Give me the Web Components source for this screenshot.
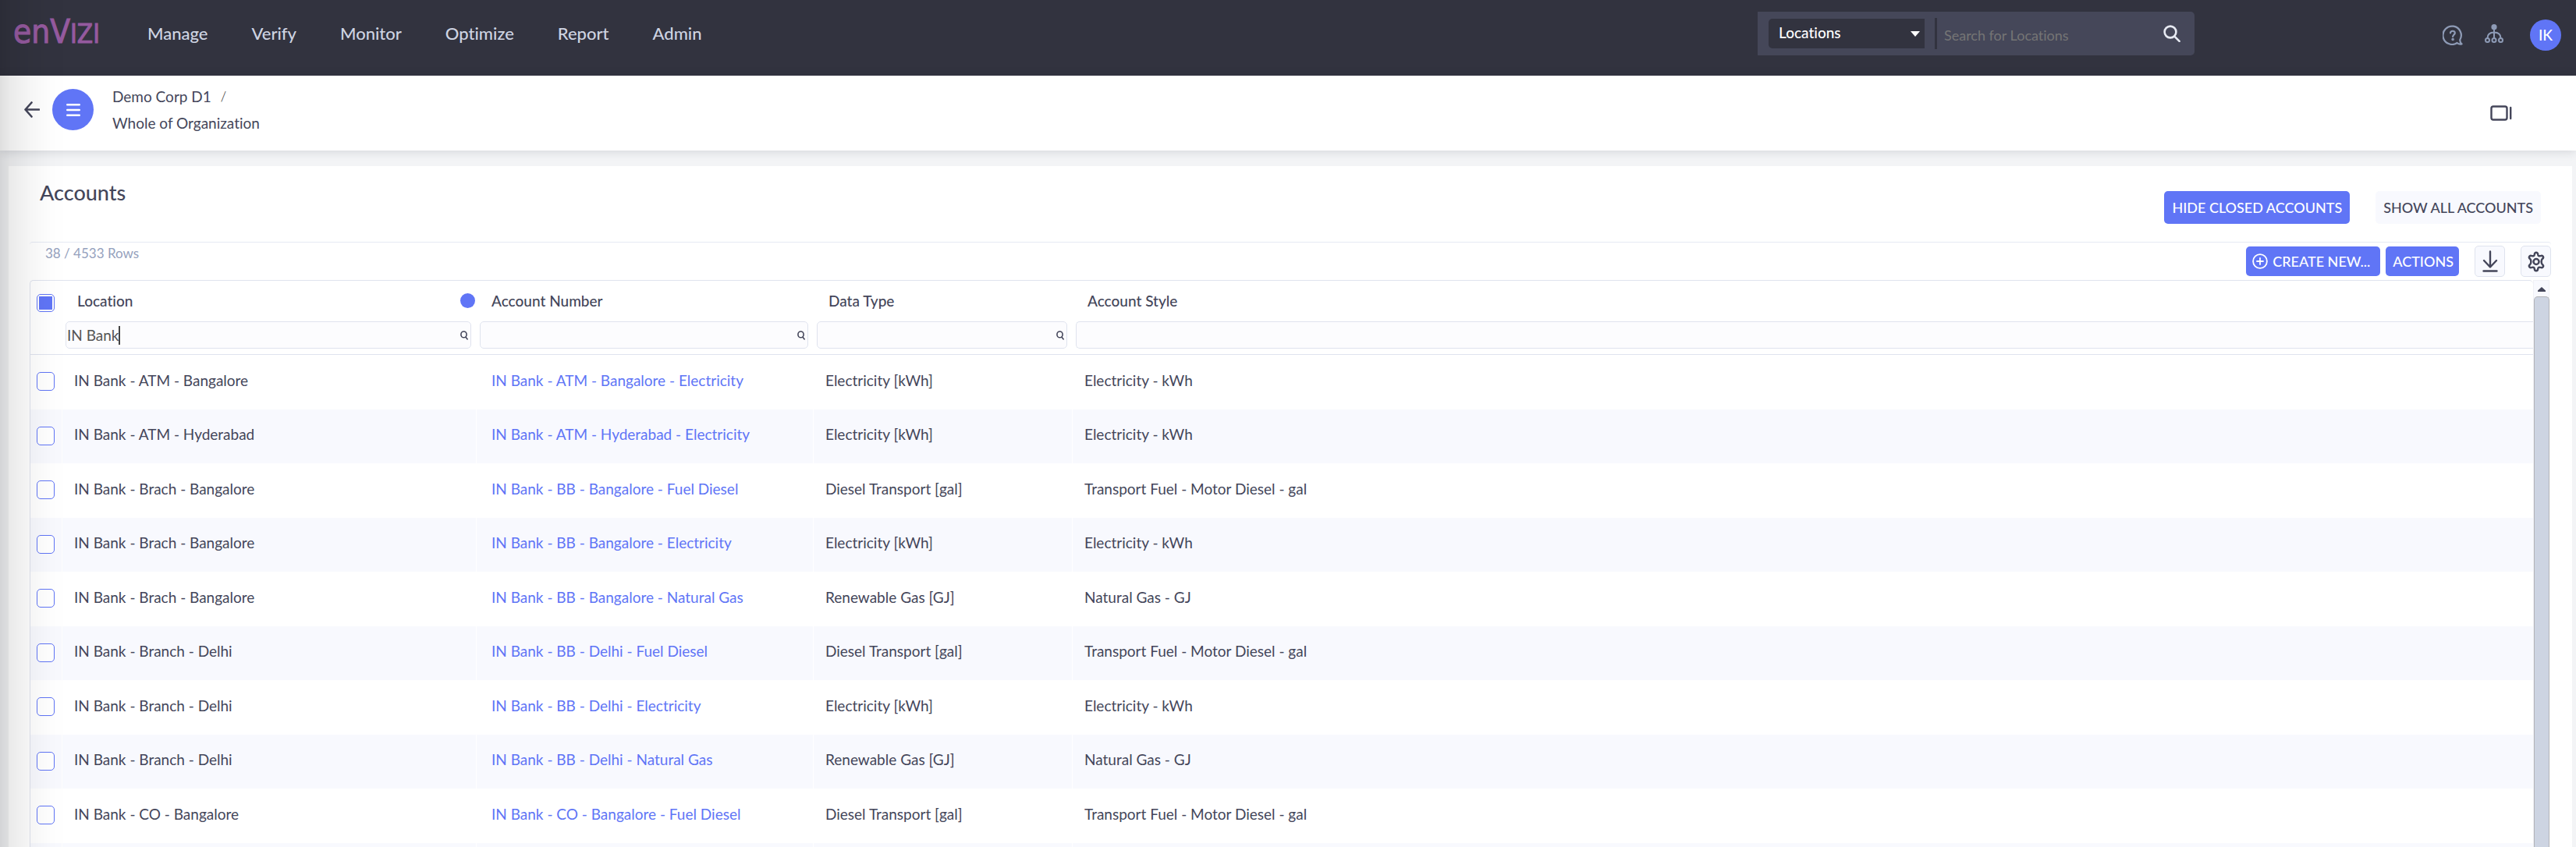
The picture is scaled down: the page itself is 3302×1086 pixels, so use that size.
<!DOCTYPE html>
<html lang="en">
<head>
<meta charset="utf-8">
<title>Envizi – Accounts</title>
<style>
  html, body { height: 100%; }
  body {
    margin: 0;
    display: flex;
    flex-direction: column;
    overflow: hidden;
    background: #f3f4f6;
    color: #44465a;
    font: 19px/24px Lato, "Open Sans", sans-serif;
    font-variant-ligatures: none;
    --ink: #44465a;
    --dark: #32333f;
    --accent: #6075f6;
    --line: #dfe3ee;
  }
  ez-panel { flex: 1; min-height: 0; margin: 20px 5px 0 11px; }
</style>
</head>
<body>
<ez-topbar></ez-topbar>
<ez-crumbs parent="Demo Corp D1" current="Whole of Organization"></ez-crumbs>
<ez-panel>
  <span slot="title">Accounts</span>
  <ez-button slot="action">HIDE CLOSED ACCOUNTS</ez-button>
  <ez-button slot="action" quiet>SHOW ALL ACCOUNTS</ez-button>
  <ez-toolbar></ez-toolbar>
  <ez-grid></ez-grid>
</ez-panel>
<ez-edge></ez-edge>

<script>
const make = (name, html, ready) => customElements.define(name, class extends HTMLElement {
  connectedCallback() {
    if (this.shadowRoot) return;
    const root = this.attachShadow({ mode: 'open' });
    root.innerHTML = `<style>:host,*{box-sizing:border-box}button,input,select{font:inherit;color:inherit;margin:0}svg{display:block}</style>` +
      (typeof html === 'function' ? html(this) : html);
    if (ready) ready(root, this);
  }
});

make('ez-logo', `
<style>
  :host { display: block; width: 108px; color: #955a9f; }
  div { display: flex; align-items: baseline; height: 40px; line-height: 36px;
        font-family: "Liberation Sans Narrow", "DejaVu Sans Condensed", sans-serif; -webkit-text-stroke: 1px #955a9f; }
  .low { font-size: 42px; }
  .vee { font-size: 42px; }
  .cap { font-size: 33px; }
</style>
<div aria-label="enVIZI"><span class="low">en</span><span class="vee">V</span><span class="cap">IZI</span></div>`);

make('ez-search', `
<style>
  :host { display: flex; align-items: center; width: 560px; height: 56px; padding: 0 18px 0 14px;
          background: #454759; border-radius: 0 5px 5px 0; }
  .pick { display: grid; align-items: center; width: 200px; height: 38px; background: var(--dark); border-radius: 5px 0 0 5px; color: #fff; }
  .pick > * { grid-area: 1/1; }
  select { appearance: none; border: 0; background: none; width: 100%; height: 38px; padding: 0 24px 2px 13px; font-weight: 500; outline: 0; }
  .pick svg { justify-self: end; margin-right: 6px; pointer-events: none; }
  .bar { width: 3px; height: 40px; background: var(--dark); margin: 0 9px 0 13px; }
  input { flex: 1; min-width: 0; border: 0; background: none; outline: 0; height: 40px; padding: 4px 0 0; font-size: 18px; color: #fff; }
  input::placeholder { color: #757575; opacity: 1; }
  button { border: 0; background: none; padding: 0; }
</style>
<label class="pick"><select aria-label="Search in"><option>Locations</option></select>
<svg width="12" height="7" viewBox="0 0 12 7"><path d="M0 0h12L6 7z" fill="#fff"/></svg></label>
<span class="bar"></span>
<input type="text" aria-label="Search" placeholder="Search for Locations">
<button aria-label="Run search"><svg width="22" height="22" viewBox="0 0 22 22" fill="none" stroke="#e6e9f2" stroke-width="2.6" stroke-linecap="round"><circle cx="9" cy="9" r="7.4"/><path d="M14.6 14.8l6 6"/></svg></button>`);

make('ez-topbar', `
<style>
  :host { display: flex; align-items: center; height: 97px; padding: 0 19px 11px 17px; background: var(--dark); color: #ced4e2; }
  nav { display: flex; gap: 56px; margin-left: 64px; font-size: 22px; font-weight: 500; }
  a { color: inherit; text-decoration: none; }
  ez-search { margin-left: auto; margin-right: 318px; }
  .tools { display: flex; align-items: center; padding-top: 4px; }
  .tools button { border: 0; padding: 0; background: none; color: #8e9bb6; }
  .tools .tree { margin: 0 34px 4px 28px; }
  .tools .me { width: 40px; height: 40px; border-radius: 50%; background: var(--accent); color: #fff; font-size: 19px; font-weight: 500; }
</style>
<ez-logo></ez-logo>
<nav><a href="#manage">Manage</a><a href="#verify">Verify</a><a href="#monitor">Monitor</a><a href="#optimize">Optimize</a><a href="#report">Report</a><a href="#admin">Admin</a></nav>
<ez-search></ez-search>
<div class="tools">
  <button aria-label="Help"><svg width="26" height="26" viewBox="0 0 26 26" fill="none" stroke="currentColor" stroke-width="2.2" stroke-linecap="round" stroke-linejoin="round"><path d="M22.2 19.2A11.7 11.7 0 1 0 18.6 23c1.600 1.400 4 1.900 6 1.400-1.500-1.300-2.400-3-2.400-5.200z"/><path d="M10 10.300c.2-3.500 6-3.300 5.800.1-.1 2.100-2.700 2.200-2.700 4.700"/><circle cx="13.100" cy="18.500" r=".7" fill="currentColor"/></svg></button>
  <button class="tree" aria-label="Hierarchy"><svg width="24" height="24" viewBox="0 0 24 24" fill="none" stroke="currentColor" stroke-width="2"><circle cx="12" cy="3.700" r="3.600" fill="currentColor" stroke="none"/><circle cx="3.500" cy="20.500" r="2.500"/><circle cx="12" cy="20.500" r="2.500"/><circle cx="20.500" cy="20.500" r="2.500"/><path d="M12 6v12M3.500 18c0-5 3.500-7.500 8.500-7.500s8.500 2.500 8.500 7.500"/></svg></button>
  <button class="me" aria-label="Account IK">IK</button>
</div>`);

make('ez-crumbs', el => `
<style>
  :host { display: flex; align-items: center; height: 96px; padding: 0 82px 9px 31px; background: #fff; box-shadow: 0 1px 12px rgba(40,42,60,.16); position: relative; }
  button { border: 0; padding: 0; background: none; }
  .menu { display: grid; place-items: center; width: 53px; height: 53px; margin: 0 24px 0 16px; border-radius: 50%; background: var(--accent); }
  nav { line-height: 34px; }
  a { display: block; color: var(--ink); text-decoration: none; }
  .up { display: flex; gap: 12px; }
  .sep { color: #222; font-size: 17px; font-weight: 300; }
  .view { margin: 9px 0 0 auto; }
</style>
<button aria-label="Back"><svg width="20" height="21" viewBox="0 0 20 21" fill="none" stroke="#44465a" stroke-width="2.600" stroke-linecap="round" stroke-linejoin="round"><path d="M19 10.500H1.500M9.500 1.500l-8 9 8 9"/></svg></button>
<button class="menu" aria-label="Menu"><svg width="18" height="18" viewBox="0 0 18 18" stroke="#fff" stroke-width="2.600" stroke-linecap="round"><path d="M1.300 2.300h15.400M1.300 9h15.400M1.300 15.700h15.400"/></svg></button>
<nav aria-label="Breadcrumb"><span class="up"><a href="#corp">${el.getAttribute('parent')}</a><span class="sep">/</span></span><a href="#org">${el.getAttribute('current')}</a></nav>
<button class="view" aria-label="Toggle side panel"><svg width="28" height="20" viewBox="0 0 28 20" fill="none" stroke="#44465a" stroke-width="2.400" stroke-linecap="round"><rect x="1.500" y="1.500" width="20" height="17" rx="2.500"/><path d="M26.200 3v14"/></svg></button>`);

make('ez-button', el => `
<style>
  :host { display: block; }
  button { display: flex; align-items: center; gap: 6px; height: 42px; padding: 0 10px; border: 0; border-radius: 5px; background: var(--accent); color: #fff; font-size: 18px; font-weight: 500; white-space: nowrap; }
  :host([quiet]) button { background: #f8f9fe; color: var(--ink); }
  :host([compact]) button { height: 38px; padding: 0 7px 0 9px; }
  :host([icon]) button { padding: 0 13px 0 8px; }
</style>
<button><slot name="icon"></slot><slot></slot></button>`);

make('ez-panel', `
<style>
  :host { display: flex; flex-direction: column; background: #fff; padding: 0 27px; overflow: hidden; }
  header { display: flex; align-items: flex-start; height: 97px; padding: 19px 13px 0; flex: none; }
  h1 { margin: 0; font-size: 27px; line-height: 30px; font-weight: 500; }
  .actions { display: flex; gap: 33px; margin: 13px 0 0 auto; }
</style>
<header><h1><slot name="title"></slot></h1><div class="actions"><slot name="action"></slot></div></header>
<slot></slot>`);

make('ez-toolbar', `
<style>
  :host { display: flex; height: 49px; padding-top: 4px; border-top: 1px solid #e6eaf4; border-radius: 4px 4px 0 0; flex: none; }
  .count { margin-left: 20px; font-size: 17px; line-height: 20px; color: #95a1bd; }
  .tools { display: flex; align-items: center; height: 40px; gap: 20px; margin-left: auto; }
  .pair { display: flex; gap: 7px; }
  .box { display: grid; place-items: center; width: 39px; height: 40px; padding: 0; border: 1px solid var(--line); border-radius: 5px; background: #f8f9fe; }
</style>
<span class="count">38 / 4533 Rows</span>
<div class="tools">
  <div class="pair">
    <ez-button compact icon><svg slot="icon" width="20" height="20" viewBox="0 0 20 20" fill="none" stroke="#fff" stroke-width="1.800" stroke-linecap="round"><circle cx="10" cy="10" r="8.900"/><path d="M10 6v8M6 10h8"/></svg>CREATE NEW...</ez-button>
    <ez-button compact>ACTIONS</ez-button>
  </div>
  <button class="box" aria-label="Download"><svg width="20" height="28" viewBox="0 0 20 28" fill="none" stroke="#44465a" stroke-width="2.400" stroke-linecap="round" stroke-linejoin="round"><path d="M10 1.500V21M2 13l8 8.500 8-8.500M1.500 26.500h17"/></svg></button>
  <button class="box" aria-label="Settings"><svg width="26" height="27" viewBox="0 0 26 27" fill="none" stroke="#44465a" stroke-width="2.500" stroke-linejoin="round"><path d="M10.800 4.200C11 2.600 11.600 1.700 13 1.700s2 .9 2.200 2.500c.3 1.900 1.500 2.600 3.300 1.900 1.500-.6 2.600-.5 3.300.7s.2 2.200-1 3.200c-1.500 1.200-1.500 5.800 0 7 1.200 1 1.700 2 1 3.200s-1.800 1.300-3.300.7c-1.800-.7-3 0-3.300 1.900-.2 1.600-.8 2.500-2.200 2.500s-2-.9-2.200-2.500c-.3-1.900-1.500-2.600-3.300-1.900-1.500.6-2.600.5-3.300-.7s-.2-2.200 1-3.200c1.500-1.200 1.500-5.800 0-7-1.200-1-1.700-2-1-3.200s1.800-1.300 3.300-.7c1.800.7 3 0 3.300-1.900z"/><circle cx="13" cy="13.500" r="3.500"/></svg></button>
</div>`);

make('ez-filter', el => `
<style>
  :host { display: grid; align-items: center; }
  :host > *, input, button, .caret { grid-area: 1/1; }
  input { width: 100%; height: 35px; padding: 0 22px 0 1px; border: 1px solid var(--line); border-radius: 5px; background: #fcfcfe; color: #555; outline: 0; }
  :host([open]) input { border-right: 0; border-radius: 5px 0 0 5px; }
  button { justify-self: end; border: 0; padding: 0; background: none; margin-right: 4px; }
  .caret { justify-self: start; pointer-events: none; border-right: 2px solid #444; }
</style>
<input type="text" aria-label="Filter ${el.getAttribute('label')}" value="${el.getAttribute('value') || ''}">
${el.hasAttribute('value') ? '<span class="caret" aria-hidden="true"></span>' : ''}
${el.hasAttribute('open') ? '' : '<button aria-label="Filter"><svg width="10" height="12" viewBox="0 0 10 12" fill="none" stroke="#44465a" stroke-width="1.600"><ellipse cx="4.500" cy="4.900" rx="3.600" ry="3.900"/><path d="M6.800 8l2.800 3.400"/></svg></button>'}`,
(root, el) => {
  const caret = root.querySelector('.caret');
  if (!caret) return;
  const pen = document.createElement('canvas').getContext('2d');
  pen.font = '19px Lato';
  caret.style.width = Math.ceil(pen.measureText(el.getAttribute('value')).width) + 3 + 'px';
  caret.style.height = '24px';
});

const data = [
  ['ATM - Bangalore', 'ATM - Bangalore - Electricity', 0],
  ['ATM - Hyderabad', 'ATM - Hyderabad - Electricity', 0],
  ['Brach - Bangalore', 'BB - Bangalore - Fuel Diesel', 1],
  ['Brach - Bangalore', 'BB - Bangalore - Electricity', 0],
  ['Brach - Bangalore', 'BB - Bangalore - Natural Gas', 2],
  ['Branch - Delhi', 'BB - Delhi - Fuel Diesel', 1],
  ['Branch - Delhi', 'BB - Delhi - Electricity', 0],
  ['Branch - Delhi', 'BB - Delhi - Natural Gas', 2],
  ['CO - Bangalore', 'CO - Bangalore - Fuel Diesel', 1]
];
const kinds = [
  ['Electricity [kWh]', 'Electricity - kWh'],
  ['Diesel Transport [gal]', 'Transport Fuel - Motor Diesel - gal'],
  ['Renewable Gas [GJ]', 'Natural Gas - GJ']
];

make('ez-grid', () => `
<style>
  :host { display: flex; flex: 1; min-height: 0; margin-right: 2px; }
  .view { flex: 1; min-width: 0; overflow: hidden; border: 1px solid var(--line); border-width: 1px 0 0 1px; border-radius: 5px 5px 0 0; }
  table { width: 100%; table-layout: fixed; border-collapse: separate; border-spacing: 0; }
  th, td { padding: 0; text-align: left; font-weight: 400; white-space: nowrap; }
  .names th { height: 51px; padding: 0 0 0 19px; font-weight: 500; }
  .names .all { padding: 6px 0 0 8px; }
  .name { display: flex; align-items: center; justify-content: space-between; }
  .dot { width: 19px; height: 19px; margin-right: 2px; border-radius: 50%; background: var(--accent); }
  .filters th { height: 44px; padding: 1px 7px 7px 4px; border-bottom: 1px solid var(--line); vertical-align: top; }
  .filters th:last-child { padding-right: 0; }
  td { height: 70px; padding: 0 0 5px 15px; border-right: 1px solid #fff; }
  td:first-child { padding: 0 0 2px 8px; }
  td:nth-child(3) { padding-left: 19px; }
  td:last-child { border-right: 0; }
  tr:nth-child(even) td { height: 69px; background: #f8f9fe; }
  a { color: var(--accent); text-decoration: none; }
  input { appearance: none; display: block; width: 23px; height: 24px; border: 1px solid var(--accent); border-radius: 5px; background: #fff; }
  .all input { height: 23px; background: linear-gradient(var(--accent), var(--accent)) center / 17px 17px no-repeat #fff; }
  .scroll { display: flex; flex-direction: column; align-items: center; width: 21px; border: solid #f0f1f6; border-width: 1px 1px 0; background: #f8f9fe; }
  .scroll svg { margin: 8px 0 6px; }
  .thumb { flex: 1; width: 20px; border: 1px solid #b3b4b8; border-bottom: 0; border-radius: 5px 5px 0 0; background: #cdd4e2; }
</style>
<div class="view"><table>
<colgroup><col style="width:41px"><col style="width:531px"><col style="width:432px"><col style="width:332px"><col></colgroup>
<thead>
<tr class="names"><th class="all"><input type="checkbox" aria-label="Select all rows"></th><th><span class="name">Location<span class="dot"></span></span></th><th>Account Number</th><th>Data Type</th><th>Account Style</th></tr>
<tr class="filters"><th></th><th><ez-filter label="Location" value="IN Bank"></ez-filter></th><th><ez-filter label="Account Number"></ez-filter></th><th><ez-filter label="Data Type"></ez-filter></th><th><ez-filter label="Account Style" open></ez-filter></th></tr>
</thead>
<tbody>${data.map(([place, account, kind]) => `<tr><td><input type="checkbox" aria-label="Select ${account}"></td><td>IN Bank - ${place}</td><td><a href="#account">IN Bank - ${account}</a></td><td>${kinds[kind][0]}</td><td>${kinds[kind][1]}</td></tr>`).join('')}
<tr><td></td><td></td><td></td><td></td><td></td></tr></tbody>
</table></div>
<div class="scroll"><svg width="10" height="6" viewBox="0 0 10 6"><path d="M5 0l5 4.500V6H0V4.500z" fill="#44465a"/></svg><div class="thumb"></div></div>`);

make('ez-edge', `
<style>
  :host { position: fixed; inset: 0 auto 0 0; width: 86px; pointer-events: none; z-index: 5;
          background: linear-gradient(90deg, rgba(0,0,0,.125), rgba(0,0,0,.08) 14px, rgba(0,0,0,.035) 40px, rgba(0,0,0,.008) 66px, transparent); }
</style>`);
</script>
</body>
</html>
